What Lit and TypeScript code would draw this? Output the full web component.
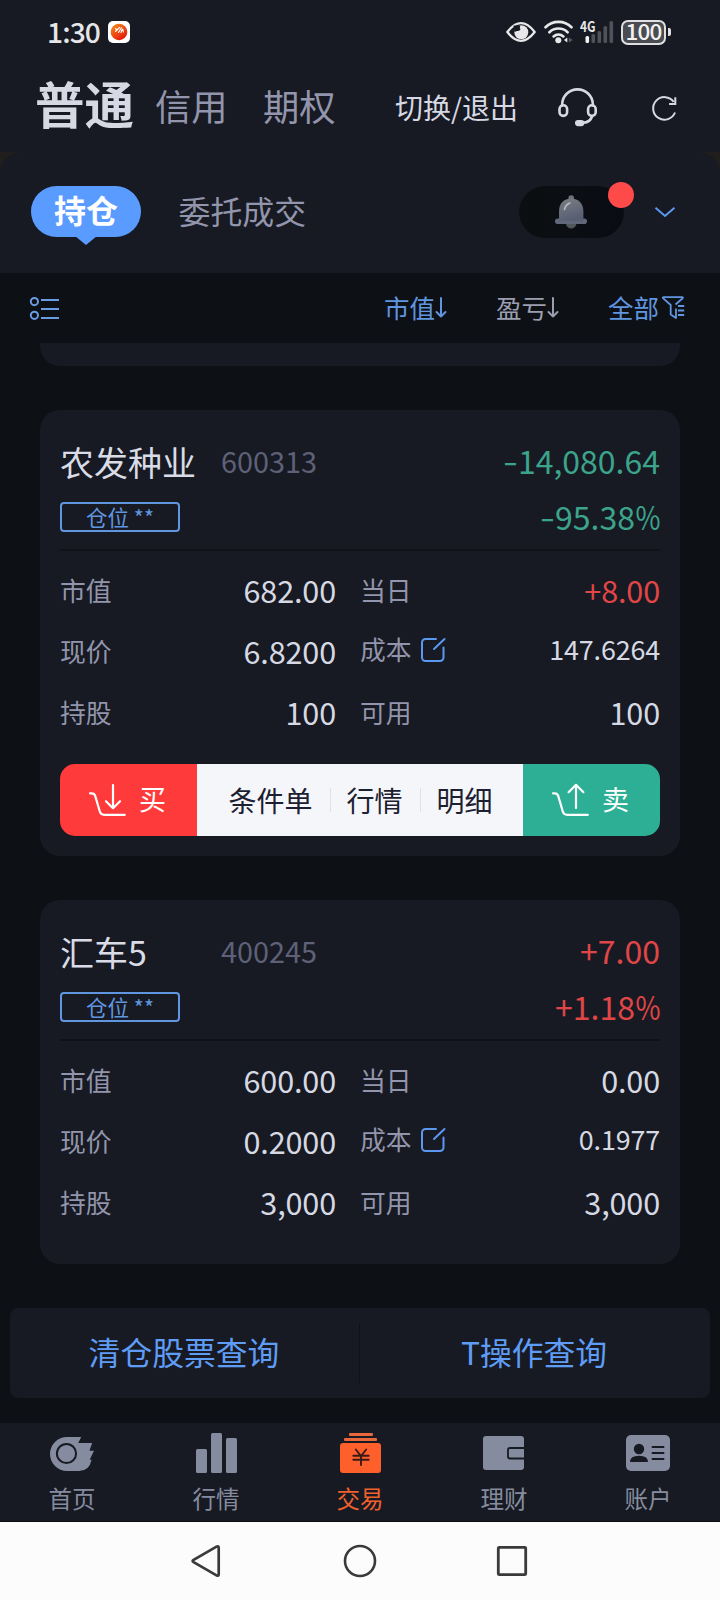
import { LitElement, html, svg, css, nothing } from "lit";
import type { SVGTemplateResult } from "lit";
import { customElement, property } from "lit/decorators.js";

const icon = (x: number, y: number, w: number, h: number, body: SVGTemplateResult) =>
  html`<svg class="ic" width=${w} height=${h} viewBox="${x} ${y} ${w} ${h}" fill="none">${body}</svg>`;

const shared = css`
  * { box-sizing: border-box; }
  .ic { display: block; flex: none; }
  .row { display: flex; }
`;

interface Holding {
  name: string; code: string; profit: string; rate: string; tone: string;
  value: string; price: string; shares: string;
  today: string; todayTone: string; cost: string; usable: string; actions: boolean;
}

const holdings: Holding[] = [
  { name: "农发种业", code: "600313", profit: "-14,080.64", rate: "-95.38", tone: "down",
    value: "682.00", price: "6.8200", shares: "100",
    today: "+8.00", todayTone: "up", cost: "147.6264", usable: "100", actions: true },
  { name: "汇车5", code: "400245", profit: "+7.00", rate: "+1.18", tone: "up",
    value: "600.00", price: "0.2000", shares: "3,000",
    today: "0.00", todayTone: "", cost: "0.1977", usable: "3,000", actions: false },
];

@customElement("holding-card")
class HoldingCard extends LitElement {
  @property({ attribute: false }) item!: Holding;

  static styles = [shared, css`
    :host { display: block; background: #171a22; border-radius: 20px; padding: 0 20px; margin: 0 40px; }
    .head { display: flex; justify-content: space-between; height: 139px; padding-top: 30px; }
    .name { font-size: 34px; line-height: 44px; color: #d9dce6; width: 161px; white-space: nowrap; }
    .code { font-size: 28.8px; line-height: 40px; color: #5e6178; margin-top: 1px; white-space: nowrap; }
    .badge { width: 120px; height: 30px; border: 2px solid #6096e0; border-radius: 4px; margin-top: 18px;
      font-size: 21.5px; line-height: 25px; text-align: center; color: #6096e0; white-space: pre; }
    .gain { display: flex; flex-direction: column; align-items: flex-end; font-size: 32px; line-height: 56px; margin-top: -8px; white-space: nowrap; }
    .dash { display: inline-block; transform: translateY(-1px) scaleX(1.35); margin-right: 2px; }
    .pct { display: inline-block; transform: scaleX(.85); transform-origin: right; margin-left: -4.4px; }
    .up { color: #e04648; }
    .down { color: #3ba48b; }
    .grid { border-top: 2px solid #0f1218; padding-top: 8px; display: grid; grid-template-columns: 276px 300px;
      column-gap: 24px; grid-auto-rows: 61px; }
    .cell { display: flex; justify-content: space-between; }
    .key { font-size: 25.8px; line-height: 61px; color: #9295ac; display: flex; }
    .val { font-size: 30.6px; line-height: 61px; color: #d6d9e3; margin-top: 1px; letter-spacing: -0.15px; }
    .val.up { color: #e04648; }
    .cost .key { margin-top: -2px; }
    .cost .val { font-size: 26.9px; margin-top: -2px; }
    .cost .ic { margin: 19px 0 0 8.5px; }
    .acts { display: flex; height: 72px; margin: 22px 0 20px; border-radius: 15px; overflow: hidden; color: #fff; }
    .buy, .sell { display: flex; width: 137px; padding-left: 28px; gap: 12px; font-size: 27px; line-height: 70px; }
    .buy { background: #ff3a3b; }
    .sell { background: #2daf95; }
    .buy .ic, .sell .ic { margin-top: 19px; }
    .mid { flex: 1; background: #f5f6fa; color: #1c2030; display: flex; align-items: center; font-size: 28px; line-height: 68px; padding: 0 0 0 31.5px; }
    .mid span { margin-top: -1px; }
    .sep { width: 1px; height: 24px; background: #dfe1e8; margin: 0 16px 0 17px; }
    .tail { height: 32px; }
  `];

  signed(t: string, pct = false) {
    const unit = pct ? html`<span class="pct">%</span>` : nothing;
    return t.startsWith("-")
      ? html`<span><span class="dash">-</span>${t.slice(1)}${unit}</span>`
      : html`<span>${t}${unit}</span>`;
  }

  cart(up: boolean) {
    return icon(88, 783, 39, 34, svg`
      <g stroke="#fff" stroke-width="2.2" stroke-linecap="round" stroke-linejoin="round">
        <path d="M90 793.3h1.8q2.6 0 3.4 2.6l4.6 15.6q1 3.3 4.4 3.3h20.6"/>
        <path d=${up ? "M113 808V785M105.6 792.2l7.4-7.4 7.4 7.4" : "M113 785v23M106 801.2l7 7 7-7"}/>
      </g>`);
  }

  render() {
    const h = this.item;
    return html`
      <div class="head">
        <div>
          <div class="row"><div class="name">${h.name}</div><div class="code">${h.code}</div></div>
          <div class="badge">仓位 **</div>
        </div>
        <div class="gain ${h.tone}">${this.signed(h.profit)}${this.signed(h.rate, true)}</div>
      </div>
      <div class="grid">
        <div class="cell"><span class="key">市值</span><span class="val">${h.value}</span></div>
        <div class="cell"><span class="key">当日</span><span class="val ${h.todayTone}">${h.today}</span></div>
        <div class="cell"><span class="key">现价</span><span class="val">${h.price}</span></div>
        <div class="cell cost">
          <span class="key">成本${icon(421, 637, 26, 26, svg`
            <path d="M437 639h-10.5a3.5 3.5 0 0 0-3.5 3.5v15a3.5 3.5 0 0 0 3.5 3.5h14.5a3.5 3.5 0 0 0 3.5-3.5V647.5M435 649l10.5-10" stroke="#5b98f0" stroke-width="2" stroke-linecap="round"/>`)}</span>
          <span class="val">${h.cost}</span>
        </div>
        <div class="cell"><span class="key">持股</span><span class="val">${h.shares}</span></div>
        <div class="cell"><span class="key">可用</span><span class="val">${h.usable}</span></div>
      </div>
      ${h.actions ? html`
        <div class="acts">
          <div class="buy">${this.cart(false)}<span>买</span></div>
          <div class="mid"><span>条件单</span><i class="sep"></i><span>行情</span><i class="sep"></i><span>明细</span></div>
          <div class="sell">${this.cart(true)}<span>卖</span></div>
        </div>` : html`<div class="tail"></div>`}
    `;
  }
}

@customElement("app-root")
class AppRoot extends LitElement {
  static styles = [shared, css`
    :host { display: block; width: 720px; height: 1600px; overflow: hidden; background: #0d1014;
      font-family: "Noto Sans CJK SC", "Noto Sans", sans-serif; color: #d9dce6; }
    .top { background: #171a22; height: 152px; }
    .status { display: flex; align-items: center; height: 64px; padding-left: 47px; }
    .clock { font-size: 28.2px; line-height: 40px; font-weight: 500; letter-spacing: -0.9px; color: #e6e6e8; margin-top: -2px; width: 61px; }
    .statusicons { margin-left: 374px; display: flex; align-items: center; }
    .net { font-size: 14.5px; font-weight: 700; line-height: 14px; color: #e6e6e8; margin: -13px -10px 0 6px; width: 15px; z-index: 1; transform: scaleX(.82); transform-origin: left; }
    .batt { width: 45px; height: 25px; border: 2px solid #e0e0e2; border-radius: 7px; background: #4b4c52; margin-left: 7px;
      font-size: 22.5px; line-height: 17.5px; font-weight: 500; color: #f2f2f2; display: flex; justify-content: center; letter-spacing: -0.9px; }
    .nub { width: 3px; height: 8px; border-radius: 0 2px 2px 0; background: #e0e0e2; margin-left: 2px; }
    .titles { display: flex; padding-left: 35px; white-space: nowrap; align-items: flex-start; color: #9295ac; }
    .t1 { font-size: 49.5px; line-height: 60px; font-weight: 700; color: #d6d9e3; margin-top: 8.5px; width: 99px; }
    .t2 { font-size: 36.3px; line-height: 50px; margin: 16px 0 0 21px; width: 72px; }
    .t3 { margin-left: 36px; }
    .t4 { font-size: 28px; line-height: 40px; color: #d6d9e3; margin: 23px 0 0 60px; width: 123px; }
    .headset { margin: 22px 0 0 39px; }
    .reload { margin: 30px 0 0 51px; }
    .panelwrap { background: #1f1e1d; height: 121px; }
    .panel { display: flex; align-items: flex-start; background: #171a22; border-radius: 22px 22px 0 0; height: 121px; padding: 34px 0 0 31px; }
    .pill { position: relative; width: 110px; height: 51px; border-radius: 26px; background: #5a9bff; color: #fff;
      font-size: 32px; font-weight: 700; line-height: 47px; text-align: center; }
    .pill::after { content: ""; position: absolute; left: 44px; top: 50px; border: 11px solid transparent; border-top: 9px solid #5a9bff; border-bottom: 0; }
    .orders { font-size: 31.9px; line-height: 48px; color: #9295ac; margin-left: 37.5px; width: 340.5px; }
    .bell { position: relative; width: 105px; height: 52px; border-radius: 26px; background: linear-gradient(90deg, #0c0f11, #0a0c14); padding: 8px 0 0 35px; }
    .dot { position: absolute; right: -10px; top: -4px; width: 26px; height: 26px; border-radius: 50%; background: #ff4a4a; }
    .chev { margin: 19px 0 0 29px; }
    .filter { display: flex; align-items: center; height: 70px; padding-left: 29px; font-size: 25.5px; line-height: 40px; color: #9c9eb0; white-space: nowrap; }
    .filter span { margin-top: -3px; }
    .blue { color: #6096e0; }
    .fi { display: flex; align-items: center; flex: none; }
    .f1 { margin-left: 323px; width: 112px; }
    .f2 { width: 112px; }
    .stub { height: 23px; margin: 0 40px 44px; background: #171a22; border-radius: 0 0 20px 20px; }
    .list { display: flex; flex-direction: column; gap: 44px; }
    .query { display: flex; align-items: center; height: 90px; margin: 44px 10px 25px; background: #171a22; border-radius: 8px; color: #5f9cf5; font-size: 31.8px; line-height: 86px; text-align: center; }
    .query div { flex: 1; padding: 0 2px 4px 0; }
    .query i { width: 1px; height: 60px; background: #0f1218; margin-left: -1px; }
    .tabs { display: flex; height: 99px; background: #171a22; border-bottom: 1px solid #0c0e13; color: #868c9f; font-size: 23.5px; }
    .tab { flex: 1; display: flex; flex-direction: column; align-items: center; padding-top: 7px; line-height: 34px; }
    .tab span { margin-top: 4.5px; }
    .on { color: #f0602e; }
    .nav { display: flex; height: 78px; background: #fcfcfc; }
    .nav .ic { margin-top: 18px; }
    .n1 { margin-left: 186px; } .n2 { margin-left: 114px; } .n3 { margin-left: 112px; }
  `];

  arrow(c: string) {
    return icon(0, 0, 12, 24, svg`<path d="M6 2v18.5M1.5 16 6 20.5l4.5-4.5" stroke=${c} stroke-width="2" stroke-linecap="round" stroke-linejoin="round"/>`);
  }

  statusBar() {
    return html`<div class="status">
      <div class="clock">1:30</div>
      ${icon(108, 21, 22, 22, svg`
        <defs><linearGradient id="g" x1="0" y1="0" x2=".7" y2="1"><stop offset="0" stop-color="#f7931e"/><stop offset="1" stop-color="#e5140a"/></linearGradient></defs>
        <rect x="108" y="21" width="22" height="22" rx="5" fill="#fff"/><circle cx="119" cy="32" r="8.3" fill="url(#g)"/>
        <path d="M115.5 28.5l1 1M115.5 31.5l4-4M118.5 32.5l3-5M121 32.5l1-3M123.3 32l-.5-3" stroke="#fff" stroke-width="1.1" stroke-linecap="round"/>`)}
      <div class="statusicons">
        ${icon(504, 20, 34, 24, svg`
          <path d="M507.3 32q13.7-17.6 27.4 0q-13.7 17.6-27.4 0z" stroke="#e8e8ea" stroke-width="2.3" stroke-linejoin="round"/>
          <circle cx="521.3" cy="32.3" r="7" fill="#e8e8ea"/><path d="M513.5 25.5h6.8q-.9 2.2.2 3.8-1.2 2.4-3.4 1.6-1.6.4-2.6 1.3z" fill="#171a22"/>`)}
        ${icon(538, 20, 36, 24, svg`
          <g stroke="#e8e8ea" stroke-width="2.7" stroke-linecap="round" transform="translate(-6 0)">
            <path d="M551.5 27.3a18.5 18.5 0 0 1 26 0M555.4 32.2a13 13 0 0 1 18.2 0M559.6 36.4a7.3 7.3 0 0 1 9.8 0"/></g>
          <circle cx="558.3" cy="40.2" r="3" fill="#e8e8ea"/><path d="M567.3 37.5v5l-3.3-2.5z" fill="#e8e8ea"/><path d="M568.8 37.5v5l4-2.5z" fill="#555860"/>`)}
        <div class="net">4G</div>
        ${icon(585, 20, 29, 24, svg`
          <rect x="585.5" y="36" width="3.6" height="7" rx="1.5" fill="#f2f2f2"/><g fill="#50525a">
          <rect x="591.5" y="34" width="3.6" height="9" rx="1.5"/><rect x="597.5" y="31" width="3.6" height="12" rx="1.5"/>
          <rect x="603.5" y="26" width="3.6" height="17" rx="1.5"/><rect x="609.5" y="21" width="3.6" height="22" rx="1.5"/></g>`)}
        <div class="batt">100</div><div class="nub"></div>
      </div>
    </div>`;
  }

  render() {
    return html`
      <div class="top">
        ${this.statusBar()}
        <div class="titles">
          <div class="t1">普通</div><div class="t2">信用</div><div class="t2 t3">期权</div><div class="t4">切换/退出</div>
          <div class="headset">${icon(557, 86, 42, 42, svg`
            <g stroke="#d6d9e3" stroke-width="2.6" stroke-linecap="round">
              <path d="M562.2 105.5v-1.2a15.3 15 0 0 1 30.6 0v1.2M592 116.5q-1.8 5.6-8.5 6.3"/>
              <rect x="559.5" y="105.3" width="7.6" height="10.6" rx="3.8"/><rect x="588.1" y="105.3" width="7.6" height="10.6" rx="3.8"/></g>
            <rect x="575" y="120" width="9.4" height="6.2" rx="3.1" fill="#d6d9e3"/>`)}</div>
          <div class="reload">${icon(650, 94, 28, 28, svg`
            <path d="M675 112.5a11.3 11.3 0 1 1-1.3-10.6M675.3 97.2v6.8h-6.2" stroke="#d6d9e3" stroke-width="2"/>`)}</div>
        </div>
      </div>
      <div class="panelwrap"><div class="panel">
        <div class="pill">持仓</div>
        <div class="orders">委托成交</div>
        <div class="bell">
          ${icon(554, 194, 34, 36, svg`
            <defs><linearGradient id="b" x1="0" y1="0" x2=".3" y2="1"><stop offset="0" stop-color="#7b7e83"/><stop offset="1" stop-color="#585f74"/></linearGradient></defs>
            <circle cx="571.2" cy="223.4" r="5.2" fill="#50585c"/><circle cx="571.2" cy="198" r="2.8" fill="#6e7178"/>
            <rect x="555" y="218.5" width="32" height="5.6" rx="2.8" fill="#61677a"/>
            <path d="M559 221v-9.5c0-8 5-13 12.2-13s12.2 5 12.2 13V221z" fill="url(#b)"/>
            <path d="M564.5 209.5q1.2-4.8 5.3-6.4" stroke="#b9bcc0" stroke-width="1.6" stroke-linecap="round"/>`)}
          <i class="dot"></i>
        </div>
        <div class="chev">${icon(653, 205, 24, 14, svg`<path d="M655.5 207.7l9.5 8.3 9.5-8.3" stroke="#5b98f0" stroke-width="2"/>`)}</div>
      </div></div>
      <div class="filter">
        ${icon(29, 295, 32, 26, svg`<g stroke="#6a9ce4" stroke-width="2"><circle cx="34.4" cy="301.6" r="3.6"/><circle cx="34.4" cy="315.3" r="3.6"/><path d="M41 300h18M41 309h18M41 318h18"/></g>`)}
        <div class="fi f1 blue"><span>市值</span>${this.arrow("#6096e0")}</div>
        <div class="fi f2"><span>盈亏</span>${this.arrow("#9c9eb0")}</div>
        <div class="fi blue"><span>全部</span>${icon(660, 295, 27, 26, svg`
          <path d="M676.5 304.5l7.2-6.3q.7-1-.6-1H664.6q-1.3 0-.6 1l7.7 6.8v9.5l5.3 3.5v-9.5M679 306h6.2M679 310.5h6.2M679 315h6.2" stroke="#6096e0" stroke-width="1.8" stroke-linejoin="round"/>`)}</div>
      </div>
      <div class="stub"></div>
      <div class="list">${holdings.map((h) => html`<holding-card .item=${h}></holding-card>`)}</div>
      <div class="query"><div>清仓股票查询</div><i></i><div>T操作查询</div></div>
      <div class="tabs">
        <div class="tab">${icon(48, 1430, 48, 46, svg`
          <path d="M67 1437h14.2l-3 6.1h14l-2.8 7.6h4.6l-4.3 9h1.9q-2.3 11.3-12.6 11.3H67a17 17 0 0 1 0-34z" fill="#868c9f"/>
          <circle cx="66.5" cy="1453.5" r="9.6" stroke="#171a22" stroke-width="2"/>`)}<span>首页</span></div>
        <div class="tab">${icon(192, 1430, 48, 46, svg`<g fill="#868c9f"><rect x="196" y="1449" width="11" height="24" rx="1.5"/><rect x="211" y="1433" width="11" height="40" rx="1.5"/><rect x="226" y="1438" width="11" height="35" rx="1.5"/></g>`)}<span>行情</span></div>
        <div class="tab on">${icon(336, 1430, 48, 46, svg`
          <g fill="#e8683c"><rect x="349" y="1433" width="24" height="3" rx="1"/><rect x="344" y="1438" width="33" height="3" rx="1"/></g>
          <rect x="340" y="1443" width="41" height="30" rx="3" fill="#ff5f2b"/>
          <path d="M355.8 1449.5l5.2 6.5 5.2-6.5M353.3 1455.8h15.4M353.3 1459.8h15.4M361 1456v9" stroke="#3a1a18" stroke-width="1.9" stroke-linecap="round"/>`)}<span>交易</span></div>
        <div class="tab">${icon(480, 1430, 48, 46, svg`<rect x="483" y="1436" width="41" height="34" rx="3" fill="#868c9f"/><path d="M524 1448h-14q-2 0-2 2v6.5q0 2 2 2h14" stroke="#171a22" stroke-width="1.8"/>`)}<span>理财</span></div>
        <div class="tab">${icon(624, 1430, 48, 46, svg`<rect x="626" y="1435" width="44" height="36" rx="5" fill="#868c9f"/>
          <g fill="#171a22"><circle cx="639" cy="1449" r="5.2"/><path d="M630 1462q0-6.3 9-6.3t9 6.3h-18z"/></g><path d="M652.5 1447h11M652.5 1453h11M652.5 1459h11" stroke="#171a22" stroke-width="2" stroke-linecap="round"/>`)}<span>账户</span></div>
      </div>
      <div class="nav">
        <div class="n1">${icon(186, 1540, 40, 44, svg`<path d="M216.5 1546.6q2.2-1.1 2.2 1.2v26.4q0 2.3-2.2 1.2l-22.9-13.2q-2-1.2 0-2.4z" stroke="#3a3a3c" stroke-width="2.7"/>`)}</div>
        <div class="n2">${icon(340, 1540, 40, 44, svg`<circle cx="360" cy="1561" r="15" stroke="#3a3a3c" stroke-width="2.6"/>`)}</div>
        <div class="n3">${icon(492, 1540, 40, 44, svg`<rect x="498.3" y="1547.3" width="27.4" height="27.4" rx="1" stroke="#3a3a3c" stroke-width="2.8"/>`)}</div>
      </div>
    `;
  }
}
